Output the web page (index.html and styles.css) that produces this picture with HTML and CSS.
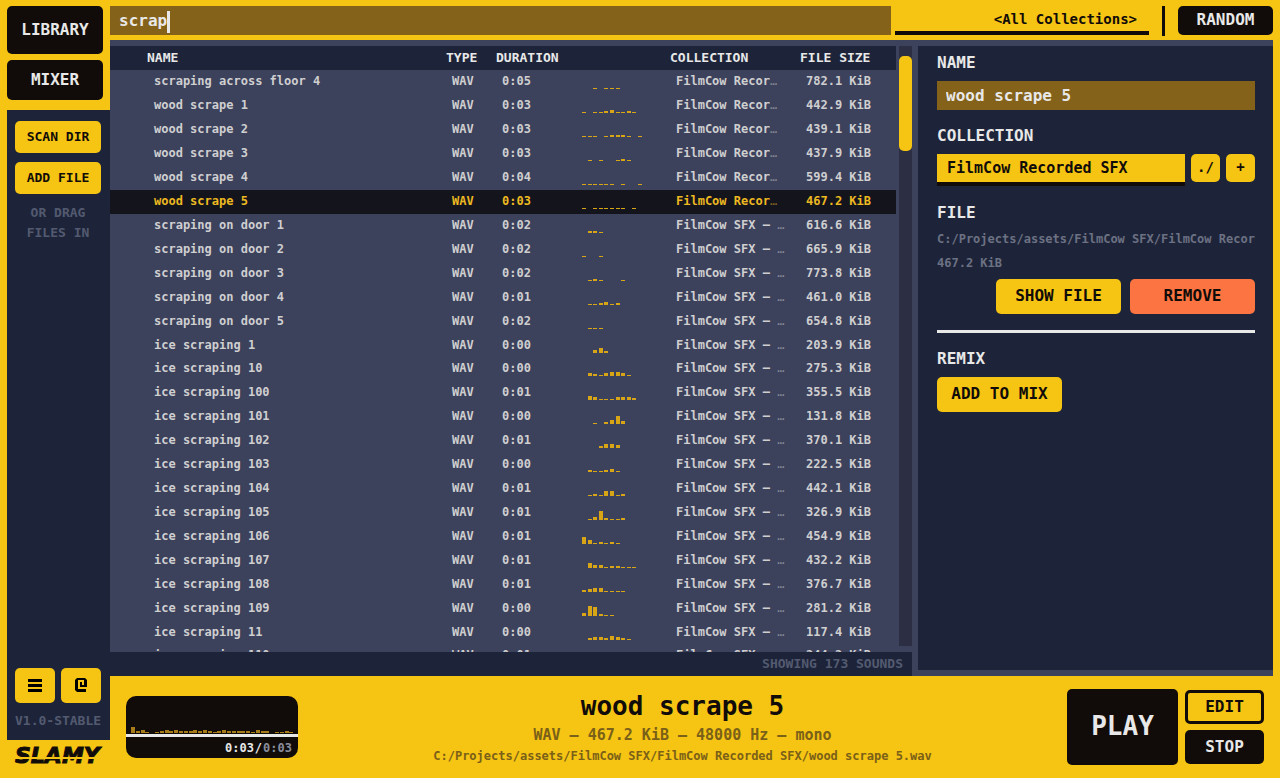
FILE: index.html
```html
<!DOCTYPE html>
<html lang="en">
<head>
    <meta charset="UTF-8">
    <meta name="viewport" content="width=device-width, initial-scale=1.0">
    <title>SLAMY</title>
    <link rel="stylesheet" href="styles.css">
</head>
<body>

    <div class="app">

        <!-- Sidebar -->
        <div class="sidebar">
            <button class="tab active">LIBRARY</button>
            <button class="tab">MIXER</button>
            <div class="side-panel">
                <button class="btn side-btn">SCAN DIR</button>
                <button class="btn side-btn">ADD FILE</button>
                <p class="hint">OR DRAG<br>FILES IN</p>
                <div class="side-bottom">
                    <div class="icon-row">
                        <button class="btn icon-btn" aria-label="Menu">
                            <svg width="14" height="14" viewBox="0 0 14 14"><path d="M0 0h14v3H0zM0 5h14v3H0zM0 10h14v3H0z"/></svg>
                        </button>
                        <button class="btn icon-btn" aria-label="Contact">
                            <svg width="12" height="15" viewBox="0 0 12 15"><path d="M2 0h8l2 2v7H5V4h2v3h2V2H3v9h8v3H2L0 12V2z"/></svg>
                        </button>
                    </div>
                    <div class="version">V1.0-STABLE</div>
                </div>
            </div>
            <div class="logo">SLAMY</div>
        </div>

        <div class="main">

            <!-- Search bar -->
            <div class="topbar">
                <div class="search">
                    <input type="text" id="search" value="scrap" aria-label="Search">
                    <span class="caret"></span>
                </div>
                <select class="filter" aria-label="Collection filter">
                    <option>&lt;All Collections&gt;</option>
                </select>
                <div class="divider"></div>
                <button class="random">RANDOM</button>
            </div>

            <div class="content">

                <!-- Sound list -->
                <div class="library">
                    <div class="list">
                        <div class="table-wrap">
                            <table>
                                <thead>
                                    <tr>
                                        <th class="name">NAME</th>
                                        <th class="type">TYPE</th>
                                        <th class="duration">DURATION</th>
                                        <th class="wave"></th>
                                        <th class="collection">COLLECTION</th>
                                        <th class="size">FILE SIZE</th>
                                    </tr>
                                </thead>
                                <tbody id="sounds"></tbody>
                            </table>
                        </div>
                        <div class="scrollbar"><div class="thumb"></div></div>
                    </div>
                    <div class="count">SHOWING 173 SOUNDS</div>
                </div>

                <!-- Details -->
                <div class="details">
                    <label for="soundName">NAME</label>
                    <input type="text" id="soundName" value="wood scrape 5">

                    <label for="soundCollection">COLLECTION</label>
                    <div class="collection-row">
                        <select id="soundCollection">
                            <option>FilmCow Recorded SFX</option>
                        </select>
                        <button class="btn small-btn">./</button>
                        <button class="btn small-btn">+</button>
                    </div>

                    <h2>FILE</h2>
                    <p class="file-info">C:/Projects/assets/FilmCow SFX/FilmCow Recor</p>
                    <p class="file-info">467.2 KiB</p>
                    <div class="file-actions">
                        <button class="btn action">SHOW FILE</button>
                        <button class="btn action remove">REMOVE</button>
                    </div>

                    <hr>

                    <h2>REMIX</h2>
                    <button class="btn action">ADD TO MIX</button>
                </div>
            </div>
        </div>
    </div>

    <!-- Player -->
    <div class="player">
        <div class="preview">
            <div class="preview-wave" id="preview"></div>
            <div class="time"><span>0:03</span><span>/</span><span class="total">0:03</span></div>
        </div>
        <div class="now-playing">
            <h1>wood scrape 5</h1>
            <p class="meta">WAV — 467.2 KiB — 48000 Hz — mono</p>
            <p class="path">C:/Projects/assets/FilmCow SFX/FilmCow Recorded SFX/wood scrape 5.wav</p>
        </div>
        <div class="player-buttons">
            <button class="play">PLAY</button>
            <div class="player-side">
                <button class="edit">EDIT</button>
                <button class="stop">STOP</button>
            </div>
        </div>
    </div>

    <script src="script.js"></script>

</body>
</html>
```
FILE: styles.css
```css
* {
    box-sizing: border-box;
}
body {
    margin: 0;
    height: 100vh;
    display: flex;
    flex-direction: column;
    background-color: #f6c413;
    color: #e8e8e8;
    font-family: 'DejaVu Sans Mono', monospace;
    font-size: 12px;
    font-weight: bold;
    overflow: hidden;
}
button, input, select {
    font-family: inherit;
    font-weight: bold;
    font-size: 16px;
    border: none;
    border-radius: 0;
    padding: 0;
    outline: none;
}
button {
    padding-bottom: 2px;
    background-color: #110c09;
    color: #e8e8e8;
    border-radius: 5px;
    cursor: pointer;
}
select {
    appearance: none;
}
h1, h2, p {
    margin: 0;
}
.app {
    flex: 1;
    min-height: 0;
    display: flex;
    padding-right: 7px;
}

/* Sidebar */
.sidebar {
    width: 110px;
    padding: 6px 0 0 7px;
    display: flex;
    flex-direction: column;
    margin-bottom: -102px;
}
.tab {
    width: 96px;
    height: 40px;
    margin-bottom: 10px;
}
.tab.active {
    height: 48px;
    margin-bottom: 6px;
}
.side-panel {
    flex: 1;
    display: flex;
    flex-direction: column;
    padding: 11px 9px 10px 8px;
    background-color: #1d2439;
}
.btn {
    background-color: #f6c413;
    color: #110c09;
}
.side-btn {
    height: 32px;
    margin-bottom: 9px;
    font-size: 13px;
}
.hint {
    color: #535a70;
    font-size: 13px;
    line-height: 20px;
    text-align: center;
}
.side-bottom {
    margin-top: auto;
}
.icon-row {
    display: flex;
    gap: 6px;
}
.icon-btn {
    flex: 1;
    height: 35px;
    padding: 0;
    display: flex;
    align-items: center;
    justify-content: center;
}
.version {
    margin-top: 9px;
    height: 18px;
    color: #535a70;
    font-size: 13px;
    line-height: 18px;
    white-space: nowrap;
}
.logo {
    position: relative;
    height: 38px;
    padding-left: 8px;
    color: #110c09;
    font-family: 'DejaVu Sans', sans-serif;
    font-size: 22px;
    font-style: italic;
    line-height: 32px;
    -webkit-text-stroke: 1px #110c09;
}
.logo::after {
    content: "";
    position: absolute;
    left: 0;
    right: 0;
    top: 17px;
    height: 2px;
    background-color: #f6c413;
}

/* Top bar */
.main {
    flex: 1;
    min-width: 0;
    display: flex;
    flex-direction: column;
}
.topbar {
    height: 40px;
    padding-top: 6px;
    display: flex;
    align-items: flex-start;
}
.search {
    position: relative;
    flex: 1;
    margin-right: 4px;
}
.search input {
    width: 100%;
    height: 29px;
    padding-left: 9px;
    background-color: #85621a;
    color: #e8e8e8;
}
.caret {
    position: absolute;
    left: 57px;
    top: 5px;
    width: 3px;
    height: 22px;
    background-color: #e8e8e8;
}
.filter {
    width: 254px;
    height: 29px;
    padding-right: 12px;
    background-color: #f6c413;
    color: #110c09;
    border-bottom: 4px solid #110c09;
    font-size: 14px;
    text-align: right;
    text-align-last: right;
}
.divider {
    width: 3px;
    height: 30px;
    margin: 0 13px;
    background-color: #110c09;
}
.random {
    width: 95px;
    height: 29px;
}

/* Sound list */
.content {
    flex: 1;
    min-height: 0;
    display: flex;
    gap: 6px;
    padding-top: 6px;
    background-color: #3c415c;
}
.library {
    flex: 1;
    min-width: 0;
    display: flex;
    flex-direction: column;
}
.list {
    flex: 1;
    min-height: 0;
    display: flex;
    gap: 3px;
}
.table-wrap {
    flex: 1;
    overflow: hidden;
}
table {
    width: 100%;
    table-layout: fixed;
    border-collapse: collapse;
}
th {
    height: 24px;
    padding: 0 0 2px 7px;
    background-color: #1d2439;
    font-size: 13px;
    text-align: left;
}
td {
    height: 24px;
    padding: 0 0 2px 13px;
    color: #cfcfd0;
    line-height: 14px;
    white-space: nowrap;
}
/* keeps the list a hair tighter than 24px per row */
tbody tr:nth-child(12n) td {
    height: 23px;
}
tr.selected {
    background-color: #14141d;
}
tr.selected td {
    color: #edb921;
}
th.name {
    padding-left: 37px;
}
td.name {
    padding-left: 44px;
}
th.type {
    width: 50px;
}
th.duration {
    width: 86px;
}
th.wave {
    width: 88px;
}
th.collection {
    width: 130px;
}
th.size {
    width: 103px;
}
td.wave {
    padding: 0 0 0 7px;
}
.wave svg {
    display: block;
    fill: #d7a516;
}
.dots {
    opacity: 0.5;
    font-weight: normal;
}
.scrollbar {
    width: 13px;
    margin-bottom: 6px;
    padding-top: 10px;
    background-color: #2c2f43;
}
.thumb {
    height: 95px;
    border-radius: 5px;
    background-color: #f6c413;
}
.count {
    height: 24px;
    padding-right: 9px;
    background-color: #1d2439;
    color: #535a70;
    font-size: 13px;
    line-height: 23px;
    text-align: right;
}

/* Details */
.details {
    width: 355px;
    margin-bottom: 6px;
    padding: 5px 18px 0 19px;
    background-color: #1d2439;
}
.details label, h2 {
    display: block;
    height: 24px;
    font-size: 16px;
    font-weight: bold;
    line-height: 24px;
}
#soundName {
    display: block;
    width: 100%;
    height: 29px;
    margin: 6px 0 14px;
    padding-left: 9px;
    background-color: #85621a;
    color: #e8e8e8;
}
.collection-row {
    display: flex;
    gap: 6px;
    height: 32px;
    margin: 6px 0 15px;
}
#soundCollection {
    flex: 1;
    padding-left: 10px;
    background-color: #f6c413;
    color: #110c09;
    border-bottom: 4px solid #110c09;
    font-size: 15px;
}
.small-btn {
    width: 29px;
    height: 28px;
    font-size: 14px;
}
.file-info {
    overflow: hidden;
    color: #6c7183;
    line-height: 24px;
    white-space: nowrap;
}
h2 + .file-info {
    margin-top: 2px;
}
.file-actions {
    display: flex;
    justify-content: flex-end;
    gap: 9px;
    margin-top: 4px;
}
.action {
    width: 125px;
    height: 35px;
}
.remove {
    background-color: #fc7441;
}
hr {
    height: 3px;
    margin: 16px 0 14px;
    border: none;
    background-color: #e8e8e8;
}
h2 + .action {
    margin-top: 6px;
}

/* Player */
.player {
    height: 102px;
    margin-left: 110px;
    padding: 0 16px;
    display: flex;
    align-items: center;
}
.preview {
    width: 172px;
    height: 62px;
    border-radius: 10px;
    background-color: #110c09;
}
.preview-wave {
    height: 41px;
    padding-left: 5px;
    border-bottom: 3px solid #e8e8e8;
}
.preview-wave svg {
    display: block;
    fill: #a67c1b;
}
.time {
    display: flex;
    justify-content: flex-end;
    gap: 1px;
    padding: 2px 6px 0 0;
    line-height: 18px;
}
.total {
    color: #898d9b;
}
.now-playing {
    flex: 1;
    min-width: 0;
    color: #110c09;
    text-align: center;
    white-space: nowrap;
}
.now-playing h1 {
    font-size: 26px;
    line-height: 34px;
}
.meta {
    color: #7a6018;
    font-size: 15px;
    line-height: 24px;
}
.path {
    color: #7a6018;
    line-height: 18px;
}
.player-buttons {
    display: flex;
    align-items: center;
    gap: 7px;
}
.play {
    width: 111px;
    height: 76px;
    font-size: 26px;
}
.player-side {
    display: flex;
    flex-direction: column;
    gap: 6px;
}
.edit, .stop {
    width: 79px;
    height: 34px;
}
.edit {
    border: 3px solid #110c09;
    background-color: #f6c413;
    color: #110c09;
}
```
FILE: script.js
```js
// name, duration, waveform (one hex digit per bar), collection, size in KiB
const REC = 'FilmCow Recor';
const SFX = 'FilmCow SFX – ';
const sounds = [
    ['scraping across floor 4', '0:05', '00101110000', REC, '782.1'],
    ['wood scrape 1', '0:03', '10112311210', REC, '442.9'],
    ['wood scrape 2', '0:03', '11101222101', REC, '439.1'],
    ['wood scrape 3', '0:03', '01010012100', REC, '437.9'],
    ['wood scrape 4', '0:04', '11111101001', REC, '599.4'],
    ['wood scrape 5', '0:03', '10111111010', REC, '467.2'],
    ['scraping on door 1', '0:02', '02210000000', SFX, '616.6'],
    ['scraping on door 2', '0:02', '10010000000', SFX, '665.9'],
    ['scraping on door 3', '0:02', '01210001000', SFX, '773.8'],
    ['scraping on door 4', '0:01', '01123120000', SFX, '461.0'],
    ['scraping on door 5', '0:02', '01110000000', SFX, '654.8'],
    ['ice scraping 1', '0:00', '00352000000', SFX, '203.9'],
    ['ice scraping 10', '0:00', '03213443100', SFX, '275.3'],
    ['ice scraping 100', '0:01', '04311133320', SFX, '355.5'],
    ['ice scraping 101', '0:00', '00102483000', SFX, '131.8'],
    ['ice scraping 102', '0:01', '00024430000', SFX, '370.1'],
    ['ice scraping 103', '0:00', '02112310000', SFX, '222.5'],
    ['ice scraping 104', '0:01', '01215512000', SFX, '442.1'],
    ['ice scraping 105', '0:01', '01392112000', SFX, '326.9'],
    ['ice scraping 106', '0:01', '74121210000', SFX, '454.9'],
    ['ice scraping 107', '0:01', '05331221110', SFX, '432.2'],
    ['ice scraping 108', '0:01', '23441111000', SFX, '376.7'],
    ['ice scraping 109', '0:00', '3a921100000', SFX, '281.2'],
    ['ice scraping 11', '0:00', '02332432100', SFX, '117.4'],
    ['ice scraping 110', '0:01', '00000000000', SFX, '244.2']
];

// Draw the bars standing on the baseline
function drawWave(values, step, width, height, base) {
    let bars = '';
    [...values].forEach((v, i) => {
        const h = parseInt(v, 16);
        if (h) {
            bars += `<rect x="${Math.round(i * step)}" y="${base - h}" width="4" height="${h}"/>`;
        }
    });
    return `<svg width="${width}" height="${height}">${bars}</svg>`;
}

document.getElementById('sounds').innerHTML = sounds.map(([name, duration, wave, collection, size]) => `
    <tr class="${name === 'wood scrape 5' ? 'selected' : ''}">
        <td class="name">${name}</td>
        <td>WAV</td>
        <td>${duration}</td>
        <td class="wave">${drawWave(wave, 5.6, 64, 22, 18)}</td>
        <td>${collection}<span class="dots">…</span></td>
        <td>${size} KiB</td>
    </tr>`).join('');

document.getElementById('preview').innerHTML =
    drawWave('6231012323222323212322222132201121', 4.8, 164, 38, 37);
```
